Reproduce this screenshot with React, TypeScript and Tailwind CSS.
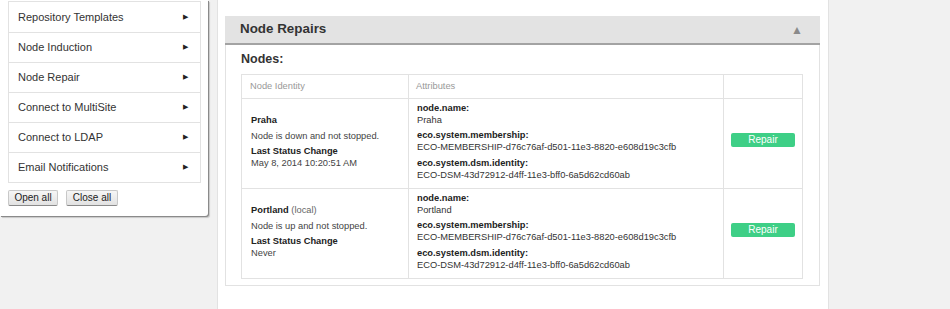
import React from 'react';

const menu = [
  'Repository Templates',
  'Node Induction',
  'Node Repair',
  'Connect to MultiSite',
  'Connect to LDAP',
  'Email Notifications',
];

const nodes = [
  {
    name: 'Praha',
    local: false,
    status: 'Node is down and not stopped.',
    changed: 'May 8, 2014 10:20:51 AM',
  },
  {
    name: 'Portland',
    local: true,
    status: 'Node is up and not stopped.',
    changed: 'Never',
  },
];

function Sidebar() {
  return (
    <div className="w-[208px] h-[216px] bg-white rounded-br-[3px] shadow-[1px_1px_0_#8a8a8a,2px_2px_1px_#c8c8c8] shrink-0">
      <ul className="ml-[8px] mt-[1px] w-[193px] border border-[#e2e2e2]">
        {menu.map((item, i) => (
          <li
            key={item}
            className={`h-[30px] flex items-center justify-between pl-[9px] pr-[12px] text-[11px] text-[#333] ${i > 0 ? 'border-t border-[#e2e2e2]' : ''}`}
          >
            <span>{item}</span>
            <span className="text-[7px] text-[#222]">&#9654;</span>
          </li>
        ))}
      </ul>
      <div className="flex gap-[8px] ml-[8px] mt-[7px]">
        <button className="w-[50px] h-[16px] text-[10px] text-[#222] leading-none bg-gradient-to-b from-[#f6f6f6] to-[#e2e2e2] border border-[#c8c8c8] border-b-[#8a8a8a] rounded-[2px]">
          Open all
        </button>
        <button className="w-[52px] h-[16px] text-[10px] text-[#222] leading-none bg-gradient-to-b from-[#f6f6f6] to-[#e2e2e2] border border-[#c8c8c8] border-b-[#8a8a8a] rounded-[2px]">
          Close all
        </button>
      </div>
    </div>
  );
}

function NodeTable() {
  return (
    <table className="w-[562px] border-collapse text-[9.3px] text-[#333]">
      <thead>
        <tr className="h-[24px]">
          <th className="w-[167px] border border-[#e2e2e2] text-left font-normal text-[#999] pl-[8px]">Node Identity</th>
          <th className="w-[315px] border border-[#e2e2e2] text-left font-normal text-[#999] pl-[7px]">Attributes</th>
          <th className="border border-[#e2e2e2]"></th>
        </tr>
      </thead>
      <tbody>
        {nodes.map((n) => (
          <tr key={n.name} className="h-[90px]">
            <td className="border border-[#e2e2e2] align-middle pl-[9px] pb-[4px]">
              <div className="leading-[12px]">
                <span className="font-bold text-[#222]">{n.name}</span>
                {n.local && <span className="text-[#666]"> (local)</span>}
              </div>
              <div className="leading-[12px] mt-[4px] text-[#444]">{n.status}</div>
              <div className="leading-[12px] mt-[3px] font-bold text-[#222]">Last Status Change</div>
              <div className="leading-[12px] text-[#444]">{n.changed}</div>
            </td>
            <td className="border border-[#e2e2e2] align-top pl-[8px] pt-[4px]">
              <div className="leading-[11.7px] font-bold text-[#222]">node.name:</div>
              <div className="leading-[11.7px]">{n.name}</div>
              <div className="leading-[11.7px] mt-[4px] font-bold text-[#222]">eco.system.membership:</div>
              <div className="leading-[11.7px]">ECO-MEMBERSHIP-d76c76af-d501-11e3-8820-e608d19c3cfb</div>
              <div className="leading-[11.7px] mt-[4px] font-bold text-[#222]">eco.system.dsm.identity:</div>
              <div className="leading-[11.7px]">ECO-DSM-43d72912-d4ff-11e3-bff0-6a5d62cd60ab</div>
            </td>
            <td className="border border-[#e2e2e2] align-middle pb-[7px]">
              <div className="flex justify-center">
                <button className="w-[64px] h-[14px] rounded-[2px] bg-[#3ecf86] text-white text-[10px] leading-none">Repair</button>
              </div>
            </td>
          </tr>
        ))}
      </tbody>
    </table>
  );
}

export default function App() {
  return (
    <div className="w-[950px] h-[309px] bg-[#f1f1f1] flex font-['Liberation_Sans',Arial,sans-serif] overflow-hidden">
      <Sidebar />
      <div className="ml-[9px] w-[612px] h-full bg-white border-x border-[#e2e2e2] pl-[7px] pt-[16px]">
        <div className="w-[595px]">
          <div className="h-[29px] bg-[#e3e3e3] border-b-2 border-[#a3a3a3] flex items-center justify-between pl-[15px] pr-[17px]">
            <span className="text-[13.4px] font-bold text-[#333]">Node Repairs</span>
            <span className="text-[12px] text-[#8a8a8a]">&#9650;</span>
          </div>
          <div className="border-x border-b border-[#e2e2e2] pl-[15px] pb-[6px]">
            <div className="text-[12.5px] font-bold text-[#333] h-[29px] pt-[4px] leading-[20px]">Nodes:</div>
            <NodeTable />
          </div>
        </div>
      </div>
    </div>
  );
}
